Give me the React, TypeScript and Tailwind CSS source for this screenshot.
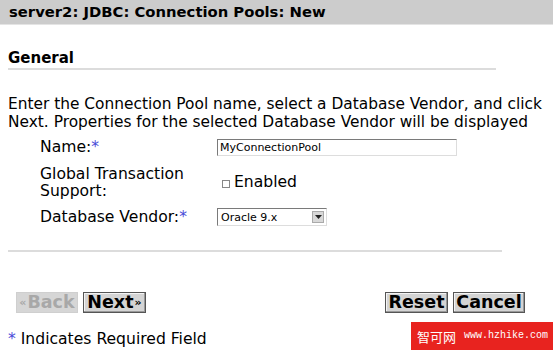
import React from 'react';

const Star = () => <span className="text-[#4a4ad8]">*</span>;

const Button: React.FC<{ children: React.ReactNode; disabled?: boolean; w: string }> = ({ children, disabled, w }) => (
  <button
    disabled={disabled}
    className={
      (disabled
        ? 'h-[21px] border border-[#cfcfcf] bg-[#d6d6d6] text-[#a8a8a8] font-bold text-[17.5px] leading-none flex items-center justify-center '
        : 'h-[21px] border border-[#555] bg-[#d4d4d4] text-black font-bold text-[17.5px] leading-none flex items-center justify-center shadow-[inset_-1px_-1px_0_#999,inset_1px_1px_0_#f4f4f4] ') + w
    }
  >
    {children}
  </button>
);

export default function App() {
  return (
    <div className="w-[553px] h-[350px] bg-white overflow-hidden relative text-black" style={{ fontFamily: '"DejaVu Sans", Verdana, sans-serif' }}>
      <div className="h-[25px] bg-[#cccccc] pl-[9px] flex items-center border-b border-[#e4e4e4]">
        <h1 className="font-bold text-[14.8px]">server2: JDBC: Connection Pools: New</h1>
      </div>

      <div className="px-[8px]">
        <h2 className="mt-[24px] font-bold text-[15px] leading-[18px] w-[488px] pb-[1px] border-b-2 border-[#dcdcdc]">General</h2>

        <p className="mt-[25px] text-[15.4px] leading-[18px] whitespace-nowrap">
          Enter the Connection Pool name, select a Database Vendor, and click
          <br />
          Next. Properties for the selected Database Vendor will be displayed
        </p>

        <div className="mt-[8px] ml-[32px] grid grid-cols-[177px_1fr] gap-y-[8px] text-[15.6px] leading-[17px]">
          <div className="flex items-center">Name:<Star /></div>
          <div className="flex items-center">
            <input
              readOnly
              value="MyConnectionPool"
              className="w-[240px] h-[17px] px-[2px] text-[11px] border border-[#7a7a7a] border-b-[#ddd] border-r-[#ddd] outline-none"
            />
          </div>

          <div className="mt-[2px]">Global Transaction<br />Support:</div>
          <div className="flex items-center pl-[5px]">
            <span className="w-[8px] h-[8px] border border-[#888] mr-[4px] mt-[4px]"></span>
            <span>Enabled</span>
          </div>

          <div className="flex items-center">Database Vendor:<Star /></div>
          <div className="flex items-center">
            <div className="w-[110px] h-[18px] border border-[#7a7a7a] border-b-[#ddd] border-r-[#ddd] flex items-center justify-between pl-[3px] pr-[2px] text-[11px]">
              <span>Oracle 9.x</span>
              <span className="w-[12px] h-[12px] bg-[#d8d8d8] border border-[#aaa] flex items-center justify-center">
                <svg width="7" height="4" viewBox="0 0 7 4"><path d="M0 0h7L3.5 4z" fill="#222" /></svg>
              </span>
            </div>
          </div>
        </div>

        <div className="mt-[24px] w-[494px] border-t-2 border-[#dcdcdc]"></div>

        <div className="mt-[40px] ml-[8px] w-[509px] flex justify-between">
          <div className="flex gap-[5px]">
            <Button disabled w="w-[62px]">
              <span className="text-[11px] mr-[1px]">«</span>Back
            </Button>
            <Button w="w-[63px]">
              Next<span className="text-[11px] ml-[1px]">»</span>
            </Button>
          </div>
          <div className="flex gap-[5px]">
            <Button w="w-[63px]">Reset</Button>
            <Button w="w-[72px]">Cancel</Button>
          </div>
        </div>

        <div className="mt-[18px] text-[15.6px] leading-[17px]"><Star /> Indicates Required Field</div>
      </div>

      <div className="absolute right-0 bottom-0 w-[142px] h-[28px] bg-[#e8231f] text-white flex items-center pl-[6px] gap-[8px]">
        <span className="text-[13px] leading-none" style={{ fontFamily: '"Noto Sans CJK SC", sans-serif' }}>智可网</span>
        <span className="text-[10px] leading-none" style={{ fontFamily: '"Liberation Mono", monospace' }}>www.hzhike.com</span>
      </div>
    </div>
  );
}
